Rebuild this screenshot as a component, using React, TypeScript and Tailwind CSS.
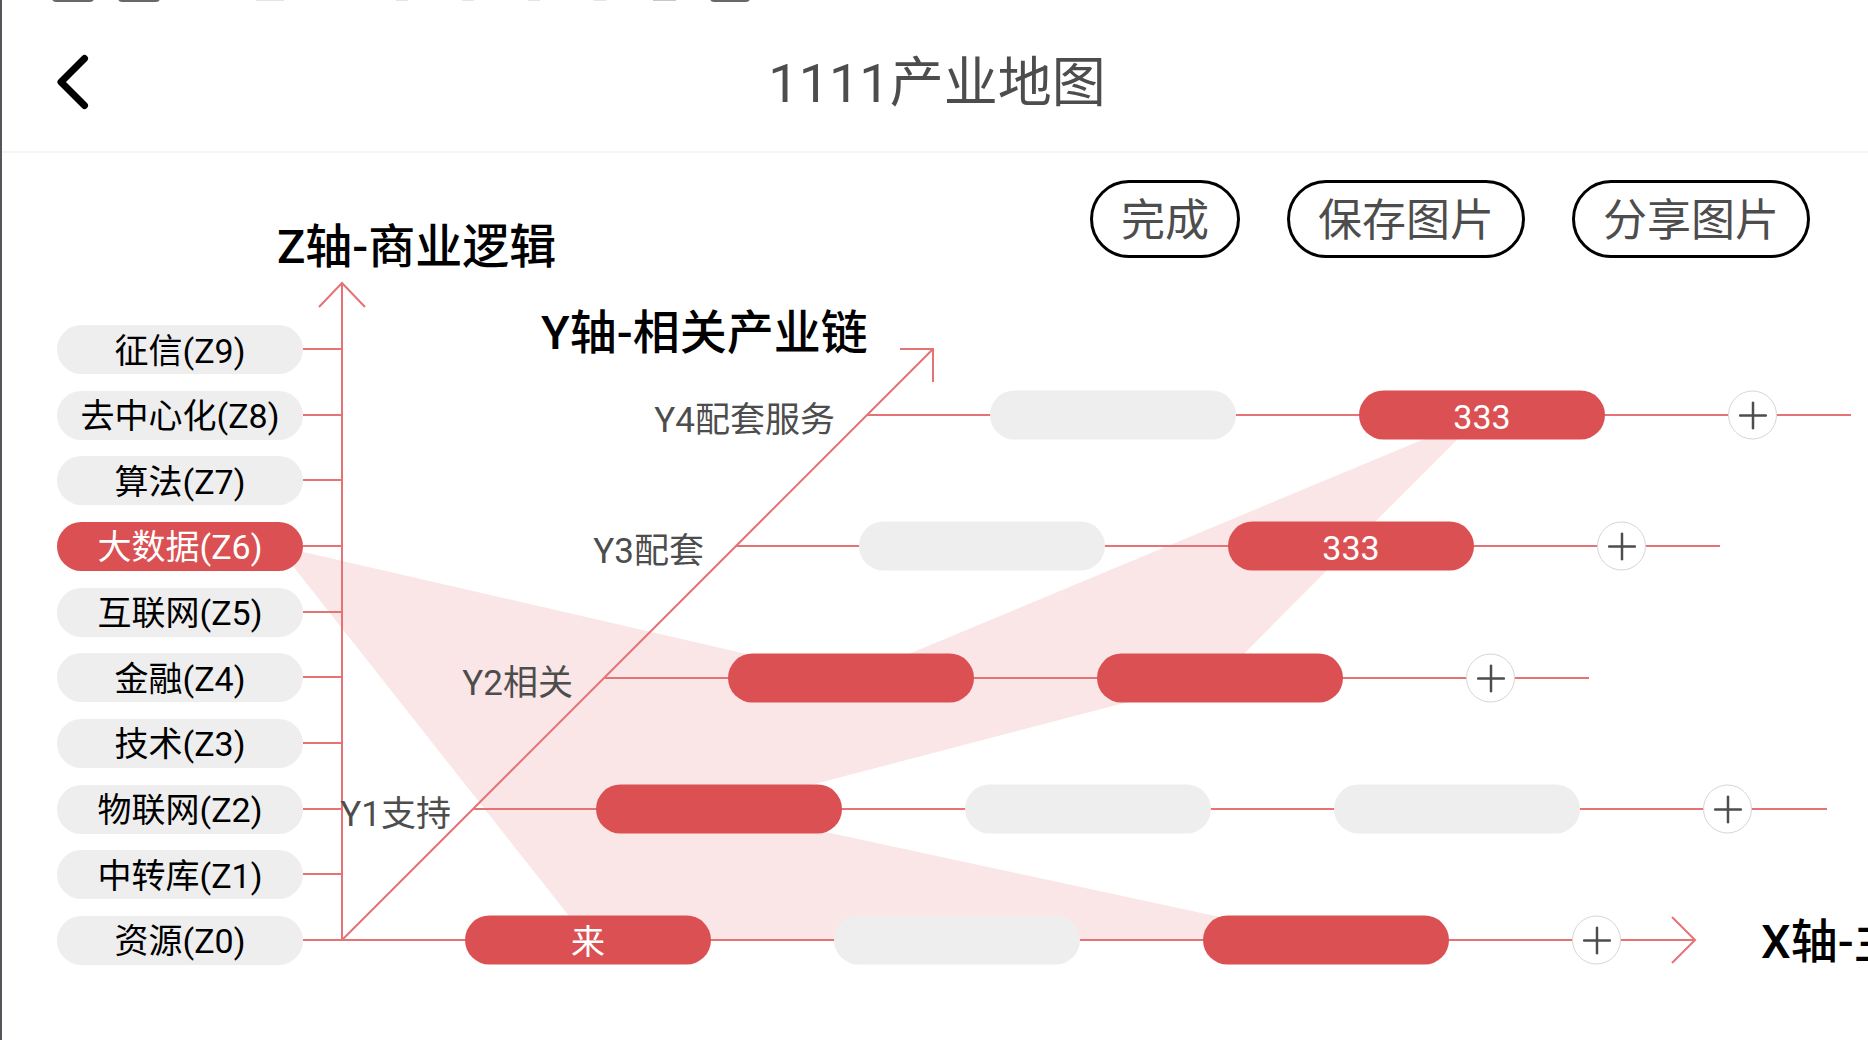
import React from "react";

const BASE_Y = 786;
const TOP_Y = 195;
const ORIGIN_X = 340;
const PILL_W = 246;
const GAP = 123;

const zLabels = [
  "征信(Z9)",
  "去中心化(Z8)",
  "算法(Z7)",
  "大数据(Z6)",
  "互联网(Z5)",
  "金融(Z4)",
  "技术(Z3)",
  "物联网(Z2)",
  "中转库(Z1)",
  "资源(Z0)",
];
const activeZ = 3;

type Node = { text: string; active: boolean };
type Row = { label: string; labelEnd: number; x: number; y: number; end: number; nodes: Node[] };

const on = (text = ""): Node => ({ text, active: true });
const off = (): Node => ({ text: "", active: false });

const rows: Row[] = [
  { label: "", labelEnd: 0, x: 340, y: 786, end: 1693, nodes: [on("来"), off(), on()] },
  { label: "Y1支持", labelEnd: 449, x: 471, y: 655, end: 1825, nodes: [on(), off(), off()] },
  { label: "Y2相关", labelEnd: 571, x: 603, y: 524, end: 1587, nodes: [on(), on()] },
  { label: "Y3配套", labelEnd: 702, x: 734, y: 392, end: 1718, nodes: [off(), on("333")] },
  { label: "Y4配套服务", labelEnd: 833, x: 865, y: 261, end: 1849, nodes: [off(), on("333")] },
];

const zY = (i: number) => TOP_Y + Math.round((i * (BASE_Y - TOP_Y)) / 9);
const nodeCenter = (r: number, i: number) =>
  `${rows[r].x + GAP + i * (PILL_W + GAP) + PILL_W / 2},${rows[r].y}`;

const region = [
  `275,${zY(activeZ)}`,
  nodeCenter(2, 0),
  nodeCenter(4, 1),
  nodeCenter(3, 1),
  nodeCenter(2, 1),
  nodeCenter(1, 0),
  nodeCenter(0, 2),
  nodeCenter(0, 0),
].join(" ");

function ClippedStatusBar() {
  return (
    <svg className="absolute left-0 top-0 h-1 w-[760px]" viewBox="0 0 760 4" aria-hidden="true">
      <g fill="#686868">
        <rect x="50" y="-10" width="42" height="12" rx="4" />
        <rect x="116" y="-10" width="42" height="12" rx="4" />
        <rect x="708" y="-10" width="40" height="12" rx="4" />
      </g>
      <g fill="#e4e4e4">
        <rect x="254" y="0" width="28" height="1" />
        <rect x="394" y="0" width="12" height="1" />
        <rect x="460" y="0" width="12" height="1" />
        <rect x="526" y="0" width="12" height="1" />
        <rect x="592" y="0" width="12" height="1" />
      </g>
      <rect x="651" y="0" width="23" height="1" fill="#c8c8c8" />
    </svg>
  );
}

function ActionButton({ children }: { children: React.ReactNode }) {
  return (
    <button className="h-[78px] rounded-full border-3 border-black bg-white px-7 pt-1 text-[44px] leading-none text-[#4d4d4d]">
      {children}
    </button>
  );
}

function Pill({ active, label, children }: { active: boolean; label?: string; children: React.ReactNode }) {
  return (
    <button
      aria-label={label}
      className={`flex h-[49px] w-[246px] shrink-0 items-center justify-center rounded-full pt-0.5 text-[34px] leading-none ${
        active ? "bg-[#db5053] text-white" : "bg-[#eeeeee] text-black"
      }`}
    >
      {children}
    </button>
  );
}

function Axes() {
  return (
    <svg className="absolute left-0 top-0 h-[870px] w-[1866px]" viewBox="0 0 1866 870" aria-hidden="true">
      <polygon points={region} fill="#fae6e6" />
      <g stroke="#e57376" strokeWidth="2" fill="none">
        <path d={`M${ORIGIN_X} ${BASE_Y}V129M317 153L${ORIGIN_X} 129L363 153`} />
        <path d={`M${ORIGIN_X} ${BASE_Y}L931 195M898 195H931V228`} />
        <path d={`M1670 763L1693 ${BASE_Y}L1670 809`} />
        {zLabels.map((z, i) => (
          <path key={z} d={`M301 ${zY(i)}H${ORIGIN_X}`} />
        ))}
        {rows.map((r) => (
          <path key={r.y} d={`M${r.x} ${r.y}H${r.end}`} />
        ))}
      </g>
    </svg>
  );
}

const axisTitle =
  "absolute -translate-y-1/2 whitespace-nowrap text-[47px] font-medium leading-none text-black";

export default function App() {
  return (
    <div className="relative flex min-h-screen flex-col overflow-hidden border-l-2 border-[#53575c] bg-white font-['Roboto','Noto_Sans_CJK_SC',sans-serif]">
      <ClippedStatusBar />
      <header className="grid h-[153px] grid-cols-[1fr_auto_1fr] items-center border-b-2 border-[#f5f5f5] pt-3">
        <button className="ml-[54px] justify-self-start" aria-label="返回">
          <svg viewBox="0 0 36 60" className="h-[60px] w-9" fill="none" stroke="#000" strokeWidth="7">
            <path d="M28.5 6.5L5 30L28.5 53.5" strokeLinecap="round" strokeLinejoin="round" />
          </svg>
        </button>
        <h1 className="pl-1 pt-1 text-[54px] leading-none text-[#4d4d4d]">1111产业地图</h1>
      </header>

      <main className="relative mt-px flex-1">
        <Axes />
        <div className="relative flex justify-end gap-[47px] pr-[58px] pt-[26px]">
          <ActionButton>完成</ActionButton>
          <ActionButton>保存图片</ActionButton>
          <ActionButton>分享图片</ActionButton>
        </div>

        <ul className="relative ml-[55px] mt-[67px] flex h-[640px] w-[246px] flex-col justify-between">
          {zLabels.map((z, i) => (
            <li key={z}>
              <Pill active={i === activeZ}>{z}</Pill>
            </li>
          ))}
        </ul>

        <h2 className={`${axisTitle} left-[275px] top-[92px]`}>Z轴-商业逻辑</h2>
        <h2 className={`${axisTitle} left-[539px] top-[178px]`}>Y轴-相关产业链</h2>
        <h2 className={`${axisTitle} left-[1759px] top-[787px]`}>X轴-主产业链</h2>

        {rows.map((r) => (
          <React.Fragment key={r.y}>
            {r.label && (
              <span
                className="absolute -translate-x-full -translate-y-1/2 whitespace-nowrap text-[35px] leading-none text-[#4d4d4d]"
                style={{ left: r.labelEnd, top: r.y + 5 }}
              >
                {r.label}
              </span>
            )}
            <div
              className="absolute flex -translate-y-1/2 items-center gap-[123px] pl-[123px]"
              style={{ left: r.x, top: r.y }}
            >
              {r.nodes.map((n, i) => (
                <Pill key={i} active={n.active} label={n.text || "节点"}>
                  {n.text}
                </Pill>
              ))}
              <button
                aria-label="添加"
                className="flex size-[49px] shrink-0 items-center justify-center rounded-full border border-[#d6d6d6] bg-white"
              >
                <svg viewBox="0 0 28 28" className="size-7" stroke="#4d4d4d" strokeWidth="2.5" strokeLinecap="round">
                  <path d="M14 1V27M1 14H27" />
                </svg>
              </button>
            </div>
          </React.Fragment>
        ))}
      </main>
    </div>
  );
}
